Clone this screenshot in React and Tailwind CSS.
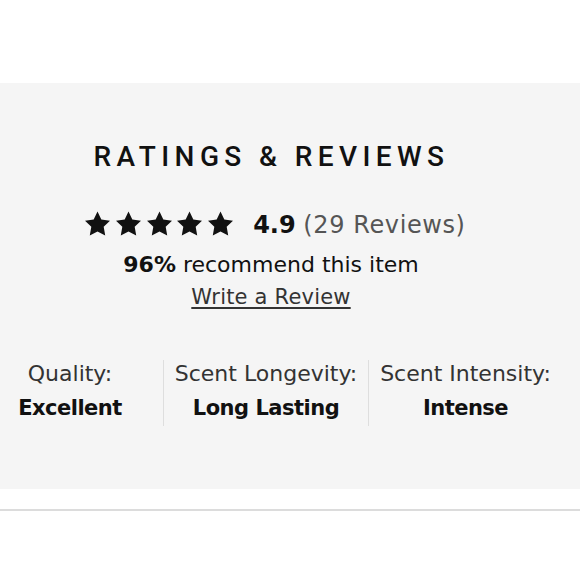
const Star = () => (
  <svg width="25" height="25" viewBox="0 0 24 24" fill="#111">
    <path d="M12 .587l3.668 7.568 8.332 1.151-6.064 5.828 1.48 8.279L12 19.771l-7.416 3.642 1.48-8.279L0 9.306l8.332-1.151z" />
  </svg>
);

function Attr({ label, value, className }) {
  return (
    <div className={`flex flex-col items-center h-[66px] pt-[3px] ${className}`}>
      <div className="text-[22px] leading-[22px] text-[#333] whitespace-nowrap">{label}</div>
      <div className="mt-[13px] font-bold text-[21px] leading-[21px] tracking-[-0.5px] text-[#111] whitespace-nowrap">{value}</div>
    </div>
  );
}

export default function App() {
  return (
    <div className="w-[580px] h-[580px] bg-white font-['DejaVu_Sans',sans-serif] text-[#111]">
      <div className="h-[83px]" />
      <div className="h-[406px] bg-[#f5f5f5] flex flex-col">
        <div className="w-[542px] flex flex-col items-center">
          <h2 className="mt-[60px] font-['Roboto',sans-serif] font-medium text-[28px] leading-[28px] tracking-[5.4px] pl-[1px] whitespace-nowrap">
            RATINGS &amp; REVIEWS
          </h2>
          <div className="mt-[40px] ml-[9px] flex items-start">
            <div className="flex gap-[5.7px]">
              <Star />
              <Star />
              <Star />
              <Star />
              <Star />
            </div>
            <div className="ml-[20px] mt-[2px] text-[24px] leading-[24px] whitespace-nowrap">
              <span className="font-bold">4.9</span>{" "}
              <span className="text-[#555] tracking-[0.6px]">(29 Reviews)</span>
            </div>
          </div>
          <p className="mt-[17px] text-[22px] leading-[22px] whitespace-nowrap">
            <span className="font-bold">96%</span> recommend this item
          </p>
          <a className="mt-[11px] text-[21px] leading-[21px] tracking-[0.2px] text-[#333] underline decoration-2 underline-offset-[3px] whitespace-nowrap">
            Write a Review
          </a>
        </div>
        <div className="mt-[52px] flex">
          <div className="w-[163px] pr-[23px]">
            <Attr label="Quality:" value="Excellent" />
          </div>
          <Attr label="Scent Longevity:" value="Long Lasting" className="w-[205px] border-l border-[#dedede]" />
          <Attr label="Scent Intensity:" value="Intense" className="w-[194px] border-l border-[#dedede]" />
        </div>
      </div>
      <div className="h-[20px]" />
      <div className="h-[2px] bg-[#dcdcdc]" />
    </div>
  );
}
